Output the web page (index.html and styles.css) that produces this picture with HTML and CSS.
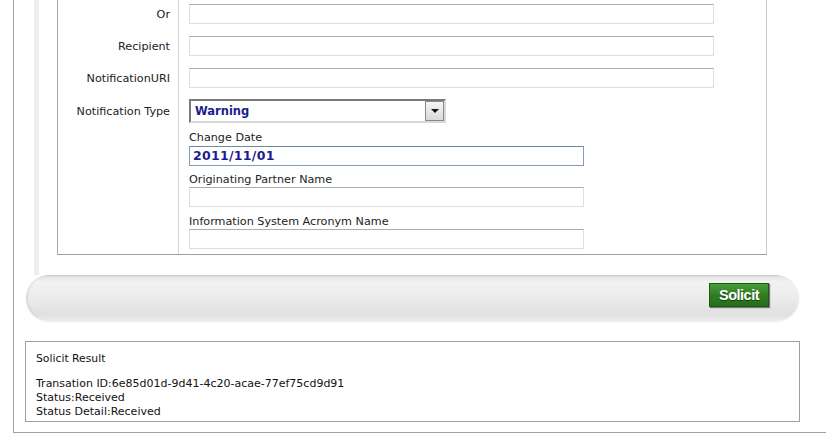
FILE: index.html
```html
<!DOCTYPE html>
<html>
<head>
<meta charset="utf-8">
<link rel="stylesheet" href="styles.css">
</head>
<body>
<div class="outer">
  <div class="panel">
    <div class="form">
      <div class="lbl">Or</div>
      <div class="fld"><div class="txt wide"></div></div>
      <div class="lbl">Recipient</div>
      <div class="fld"><div class="txt wide"></div></div>
      <div class="lbl">NotificationURI</div>
      <div class="fld"><div class="txt wide"></div></div>
      <div class="lbl sel-row">Notification Type</div>
      <div class="fld sel-row">
        <div class="select"><span class="sel-val">Warning</span><span class="sel-btn"><span class="tri"></span></span></div>
      </div>
      <div class="lbl empty"></div>
      <div class="fld stack">
        <div class="sub first">
          <div class="sub-lbl">Change Date</div>
          <div class="txt mid date">2011/11/01</div>
        </div>
        <div class="sub second">
          <div class="sub-lbl">Originating Partner Name</div>
          <div class="txt mid"></div>
        </div>
        <div class="sub last">
          <div class="sub-lbl">Information System Acronym Name</div>
          <div class="txt mid"></div>
        </div>
      </div>
    </div>
  </div>
  <div class="bar">
    <button class="solicit">Solicit</button>
  </div>
  <div class="result">
    <div class="res-title">Solicit Result</div>
    <div class="res-body">
      <div>Transation ID:6e85d01d-9d41-4c20-acae-77ef75cd9d91</div>
      <div>Status:Received</div>
      <div>Status Detail:Received</div>
    </div>
  </div>
</div>
</body>
</html>
```
FILE: styles.css
```css
html, body {
  margin: 0;
  padding: 0;
  background: #ffffff;
}
body {
  font-family: "DejaVu Sans", Verdana, sans-serif;
  color: #222222;
  width: 826px;
  height: 447px;
  overflow: hidden;
}
.outer {
  margin-left: 13px;
  border-left: 1px solid #a0a0a0;
  border-bottom: 1px solid #a0a0a0;
  padding-bottom: 10px;
}
.panel {
  margin-left: 20px;
  border-left: 5px solid #e8e8e8;
  border-image: linear-gradient(to right, #eeeeee, #e0e0e0, #ececec, #f5f5f5, #fcfcfc) 1;
  padding-left: 18px;
  padding-bottom: 20px;
}
.form {
  width: 710px;
  box-sizing: border-box;
  display: grid;
  grid-template-columns: 121px 1fr;
  grid-template-rows: 32px 32px 32px 30px auto;
  border-left: 1px solid #a8a8a8;
  border-right: 1px solid #c8c8c8;
  border-bottom: 1px solid #a0a0a0;
}
.lbl {
  border-right: 1px solid #d4d4d4;
  font-size: 11.2px;
  line-height: 14px;
  text-align: right;
  padding-right: 8px;
  padding-top: 8px;
  color: #222;
}
.lbl.sel-row {
  padding-top: 9px;
}
.fld {
  padding-left: 10px;
  padding-top: 4px;
}
.fld.sel-row {
  padding-top: 3px;
}
.txt {
  box-sizing: border-box;
  height: 20px;
  border: 1px solid #dedede;
  border-top-color: #acacac;
  background: #fff;
}
.txt.wide {
  width: 525px;
}
.txt.mid {
  width: 395px;
}
.txt.date {
  border: 1px solid #7f9db9;
  border-top-color: #6b8aa3;
  font-weight: bold;
  font-size: 12.5px;
  letter-spacing: 0.3px;
  color: #1c1c8e;
  line-height: 18px;
  padding-left: 3px;
}
.select {
  box-sizing: border-box;
  width: 257px;
  height: 24px;
  border: 2px solid;
  border-color: #7a7a7a #d8d8d8 #d8d8d8 #7a7a7a;
  display: flex;
  align-items: center;
  justify-content: space-between;
  background: #fff;
}
.sel-val {
  padding-left: 4px;
  font-weight: bold;
  font-size: 11.5px;
  color: #1c1c8e;
}
.sel-btn {
  box-sizing: border-box;
  width: 19px;
  height: 20px;
  border: 1px solid #8a8a8a;
  background: linear-gradient(#f4f4f4, #d9d9d9);
  display: flex;
  align-items: center;
  justify-content: center;
}
.tri {
  width: 0;
  height: 0;
  border-left: 4px solid transparent;
  border-right: 4px solid transparent;
  border-top: 4px solid #111;
}
.lbl.empty {
  padding: 0;
}
.fld.stack {
  padding-top: 5px;
  padding-bottom: 5px;
}
.sub-lbl {
  font-size: 11.2px;
  line-height: 14px;
  color: #222;
}
.sub.first .sub-lbl {
  margin-bottom: 1px;
}
.sub.first {
  margin-bottom: 7px;
}
.sub.second {
  margin-bottom: 8px;
}
.bar {
  margin-left: 12px;
  width: 773px;
  height: 46px;
  box-sizing: border-box;
  border-radius: 23px;
  background: linear-gradient(#c8c8c8 0px, #e6e6e6 2px, #f2f2f2 7px, #ebebeb 24px, #e1e1e1 38px, #e5e5e5 43px, #eeeeee 46px);
  box-shadow: inset 3px 0 3px -2px rgba(0,0,0,0.12), 0 1px 2px rgba(0,0,0,0.08);
  display: flex;
  justify-content: flex-end;
  align-items: flex-start;
  padding-top: 8px;
  padding-right: 30px;
}
.solicit {
  box-sizing: border-box;
  width: 60px;
  height: 24px;
  margin: 0;
  padding: 0;
  border: 1px solid #1f5a15;
  background: linear-gradient(#4a9e3a, #2f7f22 50%, #246d18);
  box-shadow: 1px 1px 1px #7a7a7a;
  color: #ffffff;
  font-family: "Liberation Sans", Arial, sans-serif;
  font-weight: bold;
  font-size: 14.5px;
  letter-spacing: -0.5px;
  text-shadow: 0 1px 1px rgba(0,0,0,0.5);
}
.result {
  margin-top: 20px;
  margin-left: 11px;
  width: 775px;
  box-sizing: border-box;
  border: 1px solid #a0a0a0;
  padding: 10px 10px 2px 10px;
  font-size: 11px;
  line-height: 14px;
  color: #111;
}
.res-title {
  font-size: 10.8px;
}
.res-body {
  margin-top: 11px;
}
```
